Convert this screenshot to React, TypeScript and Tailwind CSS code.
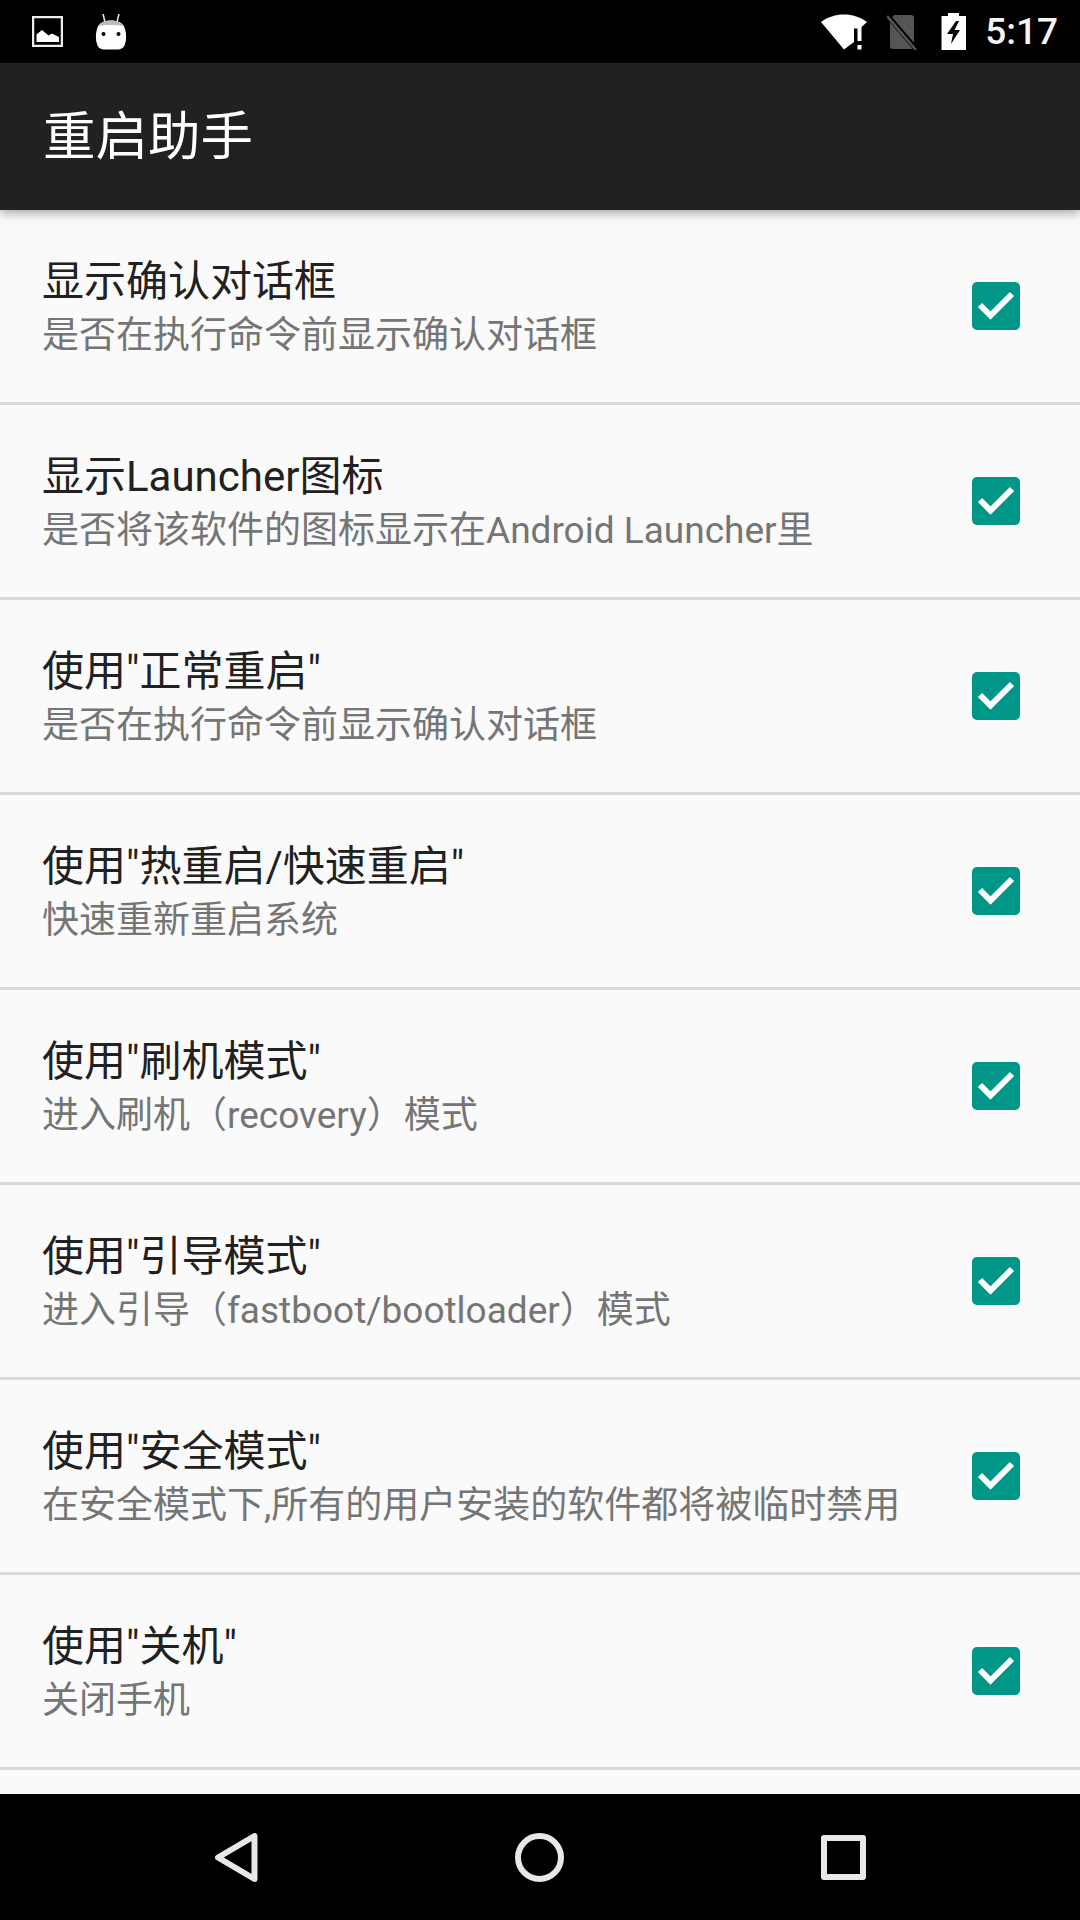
const rows = [
  ["显示确认对话框", "是否在执行命令前显示确认对话框"],
  ["显示Launcher图标", "是否将该软件的图标显示在Android Launcher里"],
  ['使用"正常重启"', "是否在执行命令前显示确认对话框"],
  ['使用"热重启/快速重启"', "快速重新重启系统"],
  ['使用"刷机模式"', "进入刷机（recovery）模式"],
  ['使用"引导模式"', "进入引导（fastboot/bootloader）模式"],
  ['使用"安全模式"', "在安全模式下,所有的用户安装的软件都将被临时禁用"],
  ['使用"关机"', "关闭手机"],
];

const StatusBar = () => {
  return (
    <div className="h-[63px] bg-black flex items-center pl-[32px] pr-[22px] shrink-0">
      <svg width="31" height="31" viewBox="0 0 31 31">
        <rect x="1" y="1" width="29" height="29" fill="none" stroke="#eee" strokeWidth="2.5" />
        <path d="M4.5 26 V18.5 L10 14 L16.5 19.5 L20 17.5 L27 21 V26 Z" fill="#fff" />
      </svg>
      <svg className="ml-[32px]" width="32" height="37" viewBox="0 0 32 37">
        <path d="M8 1 L10 9 M24 1 L22 9" stroke="#ddd" strokeWidth="1.6" fill="none" />
        <path d="M8 9 C12 7 20 7 24 9 C27 10 29 12 30 16 C31.500 21 31.500 27 30 31 C29 35 26 36.500 22 36.500 H10 C6 36.500 3 35 2 31 C0.500 27 0.500 21 2 16 C3 12 5 10 8 9 Z" fill="#fff" />
        <path d="M8 9 C12 7 20 7 24 9 C26 10 27.500 11.500 28.500 13 C22 11.500 10 11.500 3.500 13 C4.500 11.500 6 10 8 9 Z" fill="#bbb" />
        <circle cx="8.500" cy="21" r="2" fill="#000" />
        <circle cx="23.500" cy="21" r="2" fill="#000" />
      </svg>
      <div className="flex-1" />
      <svg width="46" height="36" viewBox="0 0 46 36">
        <path d="M0 8 C13 -2 33 -2 46 8 L39 14.500 H33 V28 L23 35.500 Z" fill="#fff" />
        <rect x="36.500" y="12" width="4" height="15" fill="#fff" />
        <rect x="36.500" y="31" width="4" height="4.500" fill="#fff" />
      </svg>
      <svg className="ml-[20px]" width="30" height="36" viewBox="0 0 30 36">
        <path d="M7 1 H24 Q27 1 27 4 V30 Q27 35 24 35 H6 Q3 35 3 32 V6 Z" fill="#555" />
        <path d="M0 1 L29 35" stroke="#000" strokeWidth="5" />
        <path d="M0 2 L29 36" stroke="#555" strokeWidth="2.500" />
      </svg>
      <svg className="ml-[24px]" width="26" height="37" viewBox="0 0 26 37">
        <path d="M7 0 H18 V3 H25 V37 H0.500 V3 H7 Z" fill="#fff" />
        <path d="M15 8 L6 21 H12 L10 31 L19 17 H13.500 L18 8 Z" fill="#000" />
      </svg>
      <span className="ml-[18px] text-[37px] leading-[40px] font-medium text-[#f5f5f5] font-['Roboto',sans-serif]">5:17</span>
    </div>
  );
};

const Row = ({ title, sub }: { title: string; sub: string }) => {
  return (
    <div className="h-[195px] flex items-center pl-[42px] pr-[60px] border-b-[3px] border-[#d9d9d9] shrink-0">
      <div className="flex-1 min-w-0 pt-[3px]">
        <div className="text-[42px] leading-[53px] text-[#212121]">{title}</div>
        <div className="text-[37px] leading-[50px] text-[#757575] mt-[3px]">{sub}</div>
      </div>
      <div className="w-[48px] h-[48px] rounded-[5px] bg-[#009688] shrink-0">
        <svg width="48" height="48" viewBox="0 0 48 48">
          <path d="M8 23 L18.500 33.500 L40 12" fill="none" stroke="#fff" strokeWidth="6" />
        </svg>
      </div>
    </div>
  );
};

const App = () => {
  return (
    <div className="w-[1080px] h-[1920px] flex flex-col overflow-hidden bg-[#fafafa] font-['Roboto','Noto_Sans_CJK_SC',sans-serif]">
      <StatusBar />
      <div className="h-[147px] bg-[#212121] flex items-center pl-[43px] shrink-0 shadow-[0_3px_10px_rgba(0,0,0,0.35)] z-10">
        <h1 className="text-[52.500px] text-white leading-[64px]">重启助手</h1>
      </div>
      <div className="flex-1 overflow-hidden flex flex-col">
        {rows.map((r) => (
          <Row key={r[0]} title={r[0]} sub={r[1]} />
        ))}
      </div>
      <div className="h-[126px] bg-black flex items-center justify-center gap-[257px] shrink-0">
        <svg width="43" height="49" viewBox="0 0 43 49">
          <path d="M39.500 3 V46 L3 24.500 Z" fill="none" stroke="#e8e8e8" strokeWidth="6" strokeLinejoin="round" />
        </svg>
        <div className="w-[49px] h-[49px] rounded-full border-[6px] border-[#e8e8e8]" />
        <div className="w-[45px] h-[45px] rounded-[3px] border-[6px] border-[#e8e8e8]" />
      </div>
    </div>
  );
};

export default App;
